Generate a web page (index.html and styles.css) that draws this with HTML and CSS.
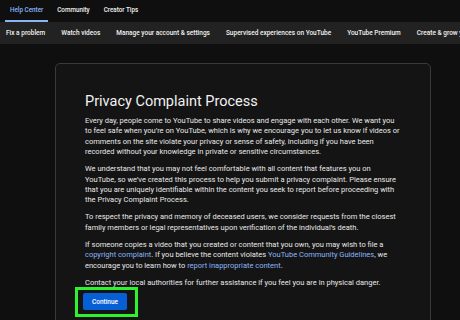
FILE: index.html
```html
<!DOCTYPE html>
<html lang="en">
<head>
    <meta charset="UTF-8">
    <meta name="viewport" content="width=device-width, initial-scale=1.0">
    <title>Privacy Complaint Process - YouTube Help</title>
    <link rel="stylesheet" href="styles.css">
</head>
<body>
    <nav class="tabs">
        <a class="tab active">Help Center</a>
        <a class="tab">Community</a>
        <a class="tab">Creator Tips</a>
    </nav>
    <nav class="topics">
        <a>Fix a problem</a>
        <a>Watch videos</a>
        <a>Manage your account &amp; settings</a>
        <a>Supervised experiences on YouTube</a>
        <a>YouTube Premium</a>
        <a>Create &amp; grow your channel</a>
    </nav>
    <main class="page">
        <section class="card">
            <h1 class="title">Privacy Complaint Process</h1>
            <p>Every day, people come to YouTube to share videos and engage with each other. We want you to feel safe when you’re on YouTube, which is why we encourage you to let us know if videos or comments on the site violate your privacy or sense of safety, including if you have been recorded without your knowledge in private or sensitive circumstances.</p>
            <p>We understand that you may not feel comfortable with all content that features you on YouTube, so we’ve created this process to help you submit a privacy complaint. Please ensure that you are uniquely identifiable within the content you seek to report before proceeding with the Privacy Complaint Process.</p>
            <p>To respect the privacy and memory of deceased users, we consider requests from the closest family members or legal representatives upon verification of the individual’s death.</p>
            <p>If someone copies a video that you created or content that you own, you may wish to file a <a class="link">copyright complaint</a>. If you believe the content violates <a class="link">YouTube Community Guidelines</a>, we encourage you to learn how to <a class="link">report inappropriate content</a>.</p>
            <p class="last">Contact your local authorities for further assistance if you feel you are in physical danger.</p>
            <div class="highlight">
                <button class="continue-btn">Continue</button>
            </div>
        </section>
    </main>
</body>
</html>
```

FILE: styles.css
```css
body {
    margin: 0;
    padding: 0;
    background: #0f0f0f;
    color: #e8e8e8;
    height: 100vh;
    overflow: hidden;
    font-family: Roboto, 'Liberation Sans', Arial, sans-serif;
}
.tabs {
    display: flex;
    gap: 4px;
    height: 22px;
    padding-left: 5px;
    background: #0f0f0f;
}
.tab {
    display: flex;
    align-items: center;
    padding: 0 5px;
    font-size: 6.3px;
    font-weight: 500;
    color: #f1f1f1;
    border-bottom: 2px solid transparent;
}
.tab.active {
    color: #8ab4f8;
    border-bottom-color: #8ab4f8;
}
.topics {
    display: flex;
    align-items: center;
    gap: 16px;
    height: 22px;
    padding-left: 6px;
    background: #222;
    white-space: nowrap;
    overflow: hidden;
}
.topics a {
    font-size: 6.5px;
    font-weight: 500;
    color: #f1f1f1;
}
.page {
    padding: 19px 0 0 55px;
}
.card {
    width: 316px;
    min-height: 300px;
    padding: 28px 29px 0 29px;
    background: #141414;
    border: 1px solid #3a3a3a;
    border-radius: 5px;
}
.title {
    margin: 0 0 4px 0;
    font-size: 14.5px;
    font-weight: 400;
    line-height: 20px;
    color: #f1f1f1;
}
.card p {
    margin: 0 0 6.6px 0;
    font-size: 7.5px;
    line-height: 10.4px;
}
.card p.last {
    margin-bottom: 0;
}
.link {
    color: #8ab4f8;
}
.highlight {
    display: inline-block;
    margin: -1px 0 0 -10px;
    padding: 3px 8px 4px 5px;
    border: 3px solid #2ef22e;
}
.continue-btn {
    display: block;
    width: 44px;
    height: 17px;
    padding: 0;
    border: none;
    border-radius: 2px;
    background: #065fd4;
    color: #fff;
    font-family: Roboto, 'Liberation Sans', Arial, sans-serif;
    font-size: 6.5px;
    font-weight: 500;
}
```
